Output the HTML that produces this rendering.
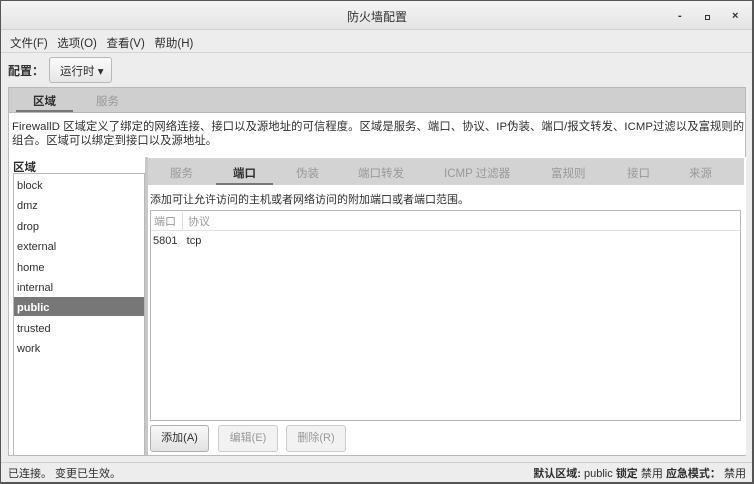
<!DOCTYPE html><html><head><meta charset="utf-8"><style>
*{margin:0;padding:0;box-sizing:border-box}
body{width:754px;height:484px;overflow:hidden;background:#ededed;font-family:"Liberation Sans","Noto Sans CJK SC",sans-serif;font-size:11px;color:#2e2e2e;position:relative}
.a{position:absolute;white-space:nowrap}
.win{position:absolute;left:0;top:0;width:754px;height:484px;border:1px solid #555;border-right:2px solid #555;border-bottom:2px solid #555}
.title{left:1px;top:1px;width:751px;height:29px;background:linear-gradient(#f4f4f4,#e4e4e4);border-bottom:1px solid #d0d0d0}
.g{color:#999}
</style></head><body>
<div class="win"></div>
<div class="a title"></div>
<div class="a" style="left:0;width:754px;top:8px;text-align:center;font-size:12px">防火墙配置</div>
<div class="a" style="left:678px;top:10px;font-size:11px;font-weight:bold">-</div>
<div class="a" style="left:705px;top:15px;width:5px;height:5px;border:1.5px solid #333"></div>
<div class="a" style="left:732px;top:10px;font-size:11px;font-weight:bold">×</div>
<div class="a" style="left:10px;top:35px;font-size:11.5px">文件(F)&nbsp;&nbsp; 选项(O)&nbsp;&nbsp; 查看(V)&nbsp;&nbsp; 帮助(H)</div>
<div class="a" style="left:1px;top:52px;width:751px;height:1px;background:#d4d4d4"></div>
<div class="a" style="left:8px;top:62px;font-weight:bold;font-size:12px">配置：</div>
<div class="a" style="left:49px;top:57px;width:63px;height:26px;border:1px solid #b8b8b8;border-radius:3px;background:linear-gradient(#fafafa,#e6e6e6)"></div>
<div class="a" style="left:60px;top:63px;font-size:11.5px">运行时 ▾</div>
<div class="a" style="left:8px;top:87px;width:738px;height:26px;background:#cfcfcf;border:1px solid #bbb"></div>
<div class="a" style="left:33px;top:93px;font-weight:bold;font-size:11.5px">区域</div>
<div class="a g" style="left:96px;top:93px;font-size:11.5px">服务</div>
<div class="a" style="left:16px;top:110px;width:57px;height:2px;background:#777"></div>
<div class="a" style="left:8px;top:113px;width:738px;height:343px;background:#fff;border-left:1px solid #bbb;border-right:1px solid #bbb"></div>
<div class="a" style="left:12px;top:120px;font-size:11.3px;line-height:14px;letter-spacing:0.1px">FirewallD 区域定义了绑定的网络连接、接口以及源地址的可信程度。区域是服务、端口、协议、IP伪装、端口/报文转发、ICMP过滤以及富规则的<br>组合。区域可以绑定到接口以及源地址。</div>
<div class="a" style="left:13px;top:159px;font-weight:bold;font-size:11.5px">区域</div>
<div class="a" style="left:13px;top:173px;width:132px;height:283px;border:1px solid #b8b8b8;background:#fff"></div>
<div class="a" style="left:14px;top:297px;width:130px;height:19px;background:#777"></div>
<div class="a" style="left:17px;top:176px;line-height:20.4px;font-size:11px">block<br>dmz<br>drop<br>external<br>home<br>internal<br><span style="color:#fff;font-weight:bold">public</span><br>trusted<br>work</div>
<div class="a" style="left:145px;top:157px;width:601px;height:299px;border-left:3px solid #c8c8c8;background:#fff"></div>
<div class="a" style="left:148px;top:158px;width:596px;height:27px;background:#d3d3d3"></div>
<div class="a g" style="left:170px;top:165px;font-size:11.5px">服务</div>
<div class="a" style="left:233px;top:165px;font-size:11.5px;font-weight:bold">端口</div>
<div class="a g" style="left:296px;top:165px;font-size:11.5px">伪装</div>
<div class="a g" style="left:358px;top:165px;font-size:11.5px">端口转发</div>
<div class="a g" style="left:444px;top:165px;font-size:11.5px">ICMP 过滤器</div>
<div class="a g" style="left:551px;top:165px;font-size:11.5px">富规则</div>
<div class="a g" style="left:627px;top:165px;font-size:11.5px">接口</div>
<div class="a g" style="left:689px;top:165px;font-size:11.5px">来源</div>
<div class="a" style="left:216px;top:183px;width:57px;height:2px;background:#777"></div>
<div class="a" style="left:150px;top:191px;font-size:11px">添加可让允许访问的主机或者网络访问的附加端口或者端口范围。</div>
<div class="a" style="left:150px;top:210px;width:591px;height:211px;border:1px solid #b8b8b8;background:#fff"></div>
<div class="a" style="left:151px;top:211px;width:589px;height:20px;border-bottom:1px solid #e2e2e2"></div>
<div class="a g" style="left:154px;top:213px;font-size:11px">端口</div>
<div class="a" style="left:182px;top:212px;width:1px;height:18px;background:#ddd"></div>
<div class="a g" style="left:188px;top:213px;font-size:11px">协议</div>
<div class="a" style="left:153px;top:235px;font-size:11px">5801&nbsp;&nbsp; tcp</div>
<div class="a" style="left:150px;top:425px;width:59px;height:27px;border:1px solid #b0b0b0;border-radius:3px;background:linear-gradient(#f8f8f8,#e2e2e2);text-align:center;line-height:25px">添加(A)</div>
<div class="a g" style="left:218px;top:425px;width:60px;height:27px;border:1px solid #ccc;border-radius:3px;background:#f2f2f2;text-align:center;line-height:25px">编辑(E)</div>
<div class="a g" style="left:286px;top:425px;width:60px;height:27px;border:1px solid #ccc;border-radius:3px;background:#f2f2f2;text-align:center;line-height:25px">删除(R)</div>
<div class="a" style="left:8px;top:455px;width:738px;height:1px;background:#bbb"></div>
<div class="a" style="left:1px;top:462px;width:751px;height:1px;background:#d0d0d0"></div>
<div class="a" style="left:8px;top:465px;font-size:11px">已连接。 变更已生效。</div>
<div class="a" style="right:8px;top:465px;font-size:11px"><b>默认区域:</b> public <b>锁定</b> 禁用 <b>应急模式：</b> 禁用</div>
</body></html>
